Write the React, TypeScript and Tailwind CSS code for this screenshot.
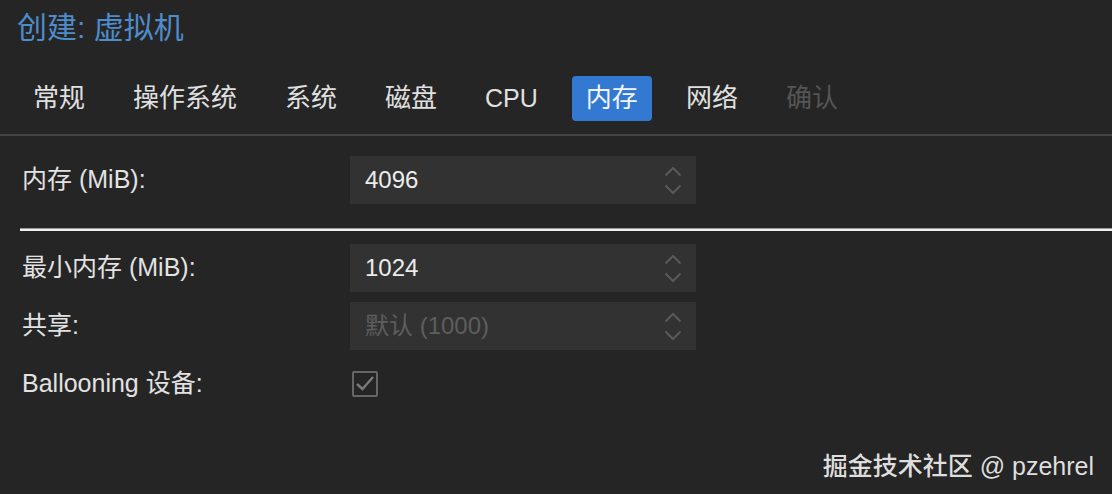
import React from "react";

const tabs = [
  { text: "常规" },
  { text: "操作系统" },
  { text: "系统" },
  { text: "磁盘" },
  { text: "CPU" },
  { text: "内存", active: true },
  { text: "网络" },
  { text: "确认", disabled: true },
];

const Spinner = () => (
  <div className="flex flex-col items-center gap-[7px] mr-[14px]">
    <svg width="18" height="11" viewBox="0 0 18 11" fill="none">
      <path d="M1.5 9.5 L9 2 L16.5 9.5" stroke="#5a5a5a" strokeWidth="2" />
    </svg>
    <svg width="18" height="11" viewBox="0 0 18 11" fill="none">
      <path d="M1.5 1.5 L9 9 L16.5 1.5" stroke="#5a5a5a" strokeWidth="2" />
    </svg>
  </div>
);

const NumberField = ({ value, muted }: { value: string; muted?: boolean }) => (
  <div className="w-[346px] h-[48px] bg-[#323232] flex items-center justify-between">
    <span
      className={
        "pl-[15px] text-[24px] " + (muted ? "text-[#5e5e5e]" : "text-[#ececec]")
      }
    >
      {value}
    </span>
    <Spinner />
  </div>
);

const Row = ({ label, children }: { label: string; children: React.ReactNode }) => (
  <div className="flex items-center h-[48px]">
    <div className="w-[328px] text-[25px] text-[#e2e2e2]">{label}</div>
    {children}
  </div>
);

export default function App() {
  return (
    <div
      className="w-[1112px] h-[494px] bg-[#252525] overflow-hidden flex flex-col"
      style={{ fontFamily: '"Liberation Sans", "Noto Sans CJK SC", sans-serif' }}
    >
      {/* title */}
      <div className="h-[55px] pl-[17px] flex items-center text-[30px] text-[#4f8cca]">
        创建: 虚拟机
      </div>

      {/* tabs */}
      <div className="flex gap-[20px] pl-[19px] pt-[21px] pb-[13px] border-b-2 border-[#434343]">
        {tabs.map((t) => (
          <div
            key={t.text}
            className={
              "h-[45px] px-[14px] flex items-center rounded-[4px] " +
              (t.text === "CPU" ? "text-[25px] " : "text-[26px] ") +
              (t.active
                ? "bg-[#3479d1] text-[#f2f6fc]"
                : t.disabled
                ? "text-[#555555]"
                : "text-[#e0e0e0]")
            }
          >
            {t.text}
          </div>
        ))}
      </div>

      {/* form */}
      <div className="pl-[22px] pt-[20px]">
        <Row label="内存 (MiB):">
          <NumberField value="4096" />
        </Row>
      </div>

      <div className="ml-[20px] mt-[24px] border-t border-[#9a9a9a] h-[3px] bg-[#efefef]" />

      <div className="pl-[22px] pt-[13px] flex flex-col gap-[10px]">
        <Row label="最小内存 (MiB):">
          <NumberField value="1024" />
        </Row>
        <Row label="共享:">
          <NumberField value="默认 (1000)" muted />
        </Row>
        <Row label="Ballooning 设备:">
          <div className="ml-[2px] w-[26px] h-[26px] border-2 border-[#666666] rounded-[2px] flex items-center justify-center">
            <svg width="20" height="18" viewBox="0 0 20 18" fill="none">
              <path d="M2 9 L7.5 14 L18 2" stroke="#7a7a7a" strokeWidth="2.4" />
            </svg>
          </div>
        </Row>
      </div>

      {/* watermark */}
      <div className="mt-[40px] pr-[18px] flex justify-end text-[25px] font-medium text-[#dedede]">
        掘金技术社区 @ pzehrel
      </div>
    </div>
  );
}
